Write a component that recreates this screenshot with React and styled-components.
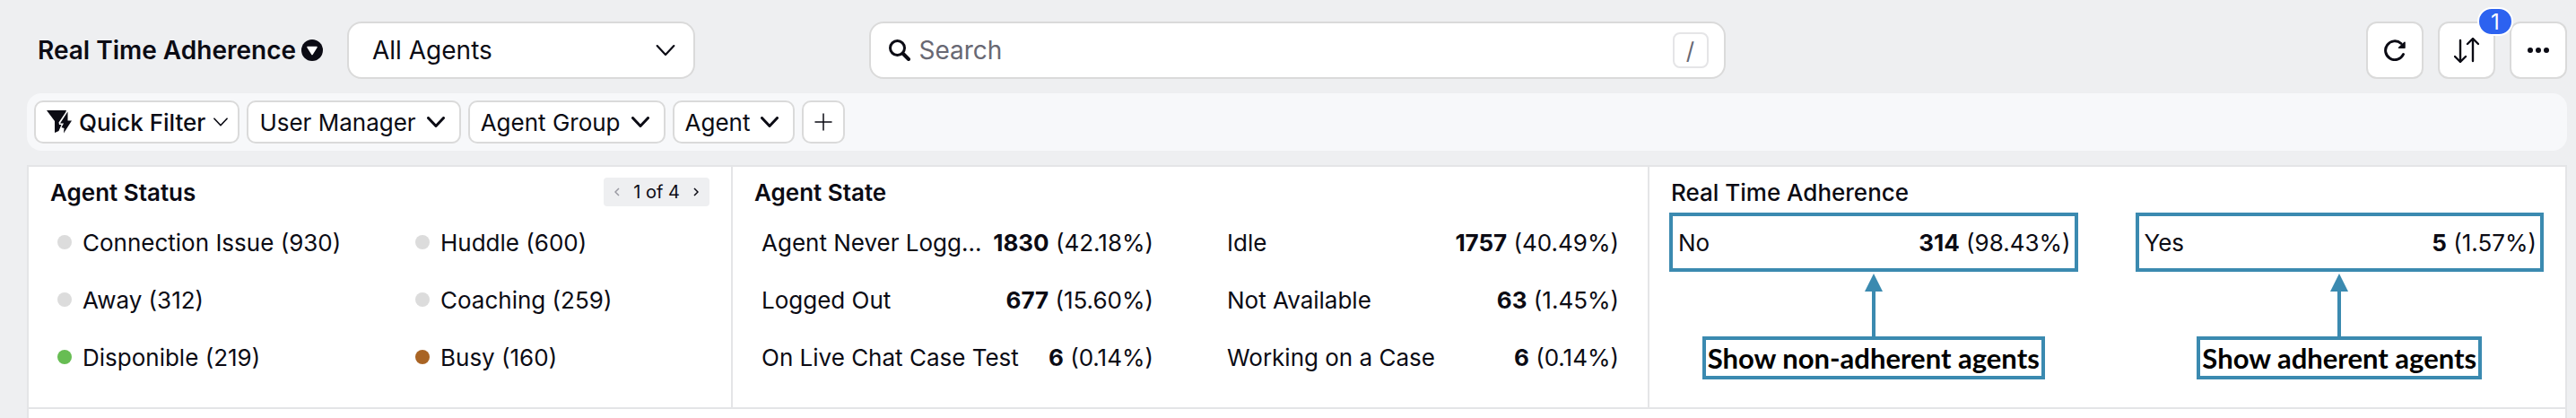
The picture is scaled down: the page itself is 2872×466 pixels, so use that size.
import React, {useState} from 'react'
import styled, {createGlobalStyle} from 'styled-components'

const filters = ["User Manager", "Agent Group", "Agent"]

const statuses = [
  {name: "Connection Issue", count: 930, color: "#dcdcdc"},
  {name: "Huddle", count: 600, color: "#dcdcdc"},
  {name: "Away", count: 312, color: "#dcdcdc"},
  {name: "Coaching", count: 259, color: "#dcdcdc"},
  {name: "Disponible", count: 219, color: "#67bd53"},
  {name: "Busy", count: 160, color: "#a96424"},
]

const states = [
  {name: "Agent Never Logg...", count: 1830, percent: "42.18%"},
  {name: "Idle", count: 1757, percent: "40.49%"},
  {name: "Logged Out", count: 677, percent: "15.60%"},
  {name: "Not Available", count: 63, percent: "1.45%"},
  {name: "On Live Chat Case Test", count: 6, percent: "0.14%"},
  {name: "Working on a Case", count: 6, percent: "0.14%"},
]

const adherence = [
  {name: "No", count: 314, percent: "98.43%", note: "Show non-adherent agents"},
  {name: "Yes", count: 5, percent: "1.57%", note: "Show adherent agents"},
]

const Chevron = ({width = 20, height = 12, stroke = 3}) => (
  <svg width={width} height={height} viewBox="0 0 20 12" fill="none" stroke="currentColor" strokeWidth={stroke} strokeLinecap="round" strokeLinejoin="round" aria-hidden="true">
    <path d="M1.500 1.500L10 10.500l8.500-9" />
  </svg>
)

const App = () => {
  const [search, setSearch] = useState("")

  return (
    <Page>
      <GlobalStyle />
      <Header>
        <Left>
          <ViewButton>
            Real Time Adherence
            <svg width="24" height="24" viewBox="0 0 24 24" aria-hidden="true">
              <circle cx="12" cy="12" r="12" fill="currentColor" />
              <path d="M7 8.500h10L12 16.500z" fill="#fff" stroke="#fff" strokeWidth="1.500" strokeLinejoin="round" />
            </svg>
          </ViewButton>
          <SelectBox>
            <select aria-label="Agents" defaultValue="All Agents">
              <option>All Agents</option>
            </select>
            <Chevron width={22} height={14} stroke={2} />
          </SelectBox>
        </Left>
        <SearchBox>
          <svg width="24" height="24" viewBox="0 0 24 24" fill="none" stroke="currentColor" strokeLinecap="round" aria-hidden="true">
            <circle cx="9.500" cy="9.500" r="8" strokeWidth="3" />
            <path d="M16 16l6 6" strokeWidth="4" />
          </svg>
          <input type="text" aria-label="Search" placeholder="Search" value={search} onChange={(e) => setSearch(e.target.value)} />
          <Key>/</Key>
        </SearchBox>
        <Actions>
          <IconButton aria-label="Refresh">
            <svg width="24" height="24" viewBox="0 0 24 24" fill="none" stroke="currentColor" strokeWidth="3" strokeLinecap="round" aria-hidden="true">
              <path d="M21.500 16.500A10.400 10.400 0 1 1 19 4.500" />
              <path d="M23 3.200v6h-6.500z" fill="currentColor" strokeWidth="1.500" strokeLinejoin="round" />
            </svg>
          </IconButton>
          <IconButton aria-label="Sort">
            <svg width="28" height="28" viewBox="0 0 28 28" fill="none" stroke="currentColor" strokeWidth="2.400" strokeLinecap="round" strokeLinejoin="round" aria-hidden="true">
              <path d="M7 3v24M1 21l6 6 6-6M21 26V1M15 7l6-6 6 6" />
            </svg>
            <Badge>1</Badge>
          </IconButton>
          <IconButton aria-label="More">
            <svg width="24" height="24" viewBox="0 0 24 24" fill="currentColor" aria-hidden="true">
              <circle cx="3" cy="12" r="3" />
              <circle cx="12" cy="12" r="3" />
              <circle cx="21" cy="12" r="3" />
            </svg>
          </IconButton>
        </Actions>
      </Header>

      <FilterBar>
        <QuickButton>
          <svg width="28" height="26" viewBox="0 0 28 26" fill="currentColor" aria-hidden="true">
            <path d="M0 0h22l-1 2.500-7.500 11 .5 2.500h2.500L13.500 23 9 25V12z" />
            <path d="M23.500 1.500L15 14.500h4L16.500 19l3 1-.5 5.500L28 11.500h-4.500z" />
          </svg>
          Quick Filter
          <Chevron width={18} height={10} stroke={2} />
        </QuickButton>
        {filters.map((name) => (
          <FilterButton key={name}>
            {name}
            <Chevron />
          </FilterButton>
        ))}
        <AddButton aria-label="Add filter">
          <svg width="20" height="20" viewBox="0 0 20 20" fill="none" stroke="currentColor" strokeWidth="1.500" strokeLinecap="round" aria-hidden="true">
            <path d="M10 1v18M1 10h18" />
          </svg>
        </AddButton>
      </FilterBar>

      <Board>
        <Panels>
          <Panel>
            <PanelHead>
              <Title $weight={600}>Agent Status</Title>
              <Pager>
                <button aria-label="Previous" disabled>
                  <svg width="6" height="10" viewBox="0 0 6 10" fill="none" stroke="currentColor" strokeWidth="1.500" aria-hidden="true"><path d="M5 1L1 5l4 4" /></svg>
                </button>
                1 of 4
                <button aria-label="Next">
                  <svg width="6" height="10" viewBox="0 0 6 10" fill="none" stroke="currentColor" strokeWidth="1.500" aria-hidden="true"><path d="M1 1l4 4-4 4" /></svg>
                </button>
              </Pager>
            </PanelHead>
            <StatusGrid>
              {statuses.map((el) => (
                <Status key={el.name}>
                  <Dot $color={el.color} />
                  {el.name} ({el.count})
                </Status>
              ))}
            </StatusGrid>
          </Panel>

          <Panel>
            <PanelHead>
              <Title $weight={600}>Agent State</Title>
            </PanelHead>
            <StateGrid>
              {states.map((el) => (
                <Stat key={el.name}>
                  <Name>{el.name}</Name>
                  <Value><b>{el.count}</b> ({el.percent})</Value>
                </Stat>
              ))}
            </StateGrid>
          </Panel>

          <Panel>
            <PanelHead>
              <Title $weight={500}>Real Time Adherence</Title>
            </PanelHead>
            <AdherenceGrid>
              {adherence.map((el) => (
                <Callout key={el.name}>
                  <Marked>
                    <Name>{el.name}</Name>
                    <Value><b>{el.count}</b> ({el.percent})</Value>
                  </Marked>
                  <svg width="20" height="70" viewBox="0 0 20 70" fill="#3b8ab0" aria-hidden="true">
                    <path d="M10 0l10 20h-8v50H8V20H0z" />
                  </svg>
                  <Note>{el.note}</Note>
                </Callout>
              ))}
            </AdherenceGrid>
          </Panel>
        </Panels>
      </Board>
    </Page>
  )
}

export default App

const GlobalStyle = createGlobalStyle`
*{
  box-sizing:border-box;
}
body{
  margin:0;
  background:#eeeff1;
}
body, button, input, select{
  font-family:Inter, "Liberation Sans", sans-serif;
  font-size:26px;
  color:#0b0b14;
}
button{
  cursor:pointer;
}
svg{
  flex-shrink:0;
}
`
const Page = styled.div`
display:flex;
flex-direction:column;
min-height:100vh;
padding:24px 10px 0 30px;
`
const Header = styled.header`
display:grid;
grid-template-columns:1fr minmax(0, 955px) 1fr;
align-items:center;
`
const Left = styled.div`
display:flex;
align-items:center;
gap:27px;
padding-left:12px;
`
const ViewButton = styled.button`
display:flex;
align-items:center;
gap:6px;
padding:0;
border:none;
background:none;
font-size:28px;
font-weight:600;
white-space:nowrap;
`
const SelectBox = styled.div`
display:flex;
align-items:center;
width:388px;
height:64px;
padding:0 20px 0 26px;
background:#fff;
border:2px solid #dadada;
border-radius:16px;
select{
  flex:1;
  appearance:none;
  padding:0;
  border:none;
  outline:none;
  background:none;
  font-size:28px;
}
`
const SearchBox = styled.label`
display:flex;
align-items:center;
gap:10px;
height:64px;
padding:0 17px 0 20px;
background:#fff;
border:2px solid #dadada;
border-radius:16px;
input{
  flex:1;
  min-width:0;
  padding:0;
  border:none;
  outline:none;
  background:none;
  font-size:28px;
}
input::placeholder{
  color:#686873;
  opacity:1;
}
`
const Key = styled.kbd`
display:flex;
justify-content:center;
align-items:center;
width:40px;
height:40px;
border:2px solid #e5e5e7;
border-radius:8px;
font-family:inherit;
font-size:26px;
color:#686873;
`
const Actions = styled.div`
display:flex;
justify-content:flex-end;
gap:16px;
`
const IconButton = styled.button`
position:relative;
display:flex;
justify-content:center;
align-items:center;
width:64px;
height:64px;
padding:0;
color:#0b0b14;
background:#fff;
border:2px solid #dadada;
border-radius:12px;
`
const Badge = styled.span`
position:absolute;
top:-18px;
right:-22px;
z-index:1;
display:flex;
justify-content:center;
align-items:center;
width:40px;
height:32px;
border:2px solid #fff;
border-radius:16px;
background:#2c62f0;
color:#fff;
font-size:24px;
`
const FilterBar = styled.div`
display:flex;
gap:8px;
margin-top:16px;
padding:8px;
background:#f7f8fa;
border-radius:16px;
`
const FilterButton = styled.button`
display:flex;
align-items:center;
gap:12px;
height:48px;
padding:0 16px 0 12px;
background:#fff;
border:2px solid #dadada;
border-radius:10px;
white-space:nowrap;
`
const QuickButton = styled(FilterButton)`
gap:8px;
padding:0 10px 0 12px;
font-weight:500;
`
const AddButton = styled(FilterButton)`
justify-content:center;
width:48px;
padding:0;
`
const Board = styled.main`
flex:1;
margin-top:16px;
background:#fff;
border:2px solid #e4e5e7;
border-bottom:none;
`
const Panels = styled.div`
display:grid;
grid-template-columns:783fr 1022fr 1023fr;
border-bottom:2px solid #e4e5e7;
`
const Panel = styled.section`
min-width:0;
padding:12px 24px 24px;
border-left:2px solid #e4e5e7;
&:first-child{
  border-left:none;
}
`
const PanelHead = styled.div`
display:flex;
justify-content:space-between;
align-items:center;
height:32px;
`
const Title = styled.h2`
margin:0;
font-size:26px;
font-weight:${(props) => props.$weight};
`
const Pager = styled.div`
display:flex;
align-items:center;
gap:15px;
height:32px;
padding:0 12px;
background:#eeeff1;
border-radius:4px;
font-size:20px;
button{
  display:flex;
  padding:0;
  border:none;
  background:none;
}
button:disabled{
  color:#9a9aa2;
}
`
const StatusGrid = styled.div`
display:grid;
grid-template-columns:399px 1fr;
grid-auto-rows:64px;
padding:8px 0 0 8px;
`
const Status = styled.div`
display:flex;
align-items:center;
gap:12px;
white-space:nowrap;
`
const Dot = styled.span`
width:16px;
height:16px;
border-radius:50%;
background:${(props) => props.$color};
`
const StateGrid = styled.div`
display:grid;
grid-template-columns:1fr 1fr;
grid-auto-rows:64px;
column-gap:82px;
padding:8px 8px 0 8px;
`
const Stat = styled.div`
display:flex;
justify-content:space-between;
align-items:center;
gap:6px;
min-width:0;
`
const Name = styled.span`
overflow:hidden;
text-overflow:ellipsis;
white-space:nowrap;
`
const Value = styled.span`
white-space:nowrap;
b{
  font-weight:700;
}
`
const AdherenceGrid = styled.div`
display:grid;
grid-template-columns:1fr 1fr;
column-gap:64px;
margin:7px 0 0 -2px;
`
const Callout = styled.div`
display:flex;
flex-direction:column;
align-items:center;
`
const Marked = styled(Stat)`
width:100%;
height:66px;
margin-bottom:2px;
padding:0 4px 0 6px;
border:4px solid #3b8ab0;
`
const Note = styled.strong`
display:flex;
align-items:center;
height:48px;
padding:0 2px;
border:4px solid #3b8ab0;
font-family:Lato, sans-serif;
font-size:31px;
font-weight:700;
white-space:nowrap;
color:#000;
`
